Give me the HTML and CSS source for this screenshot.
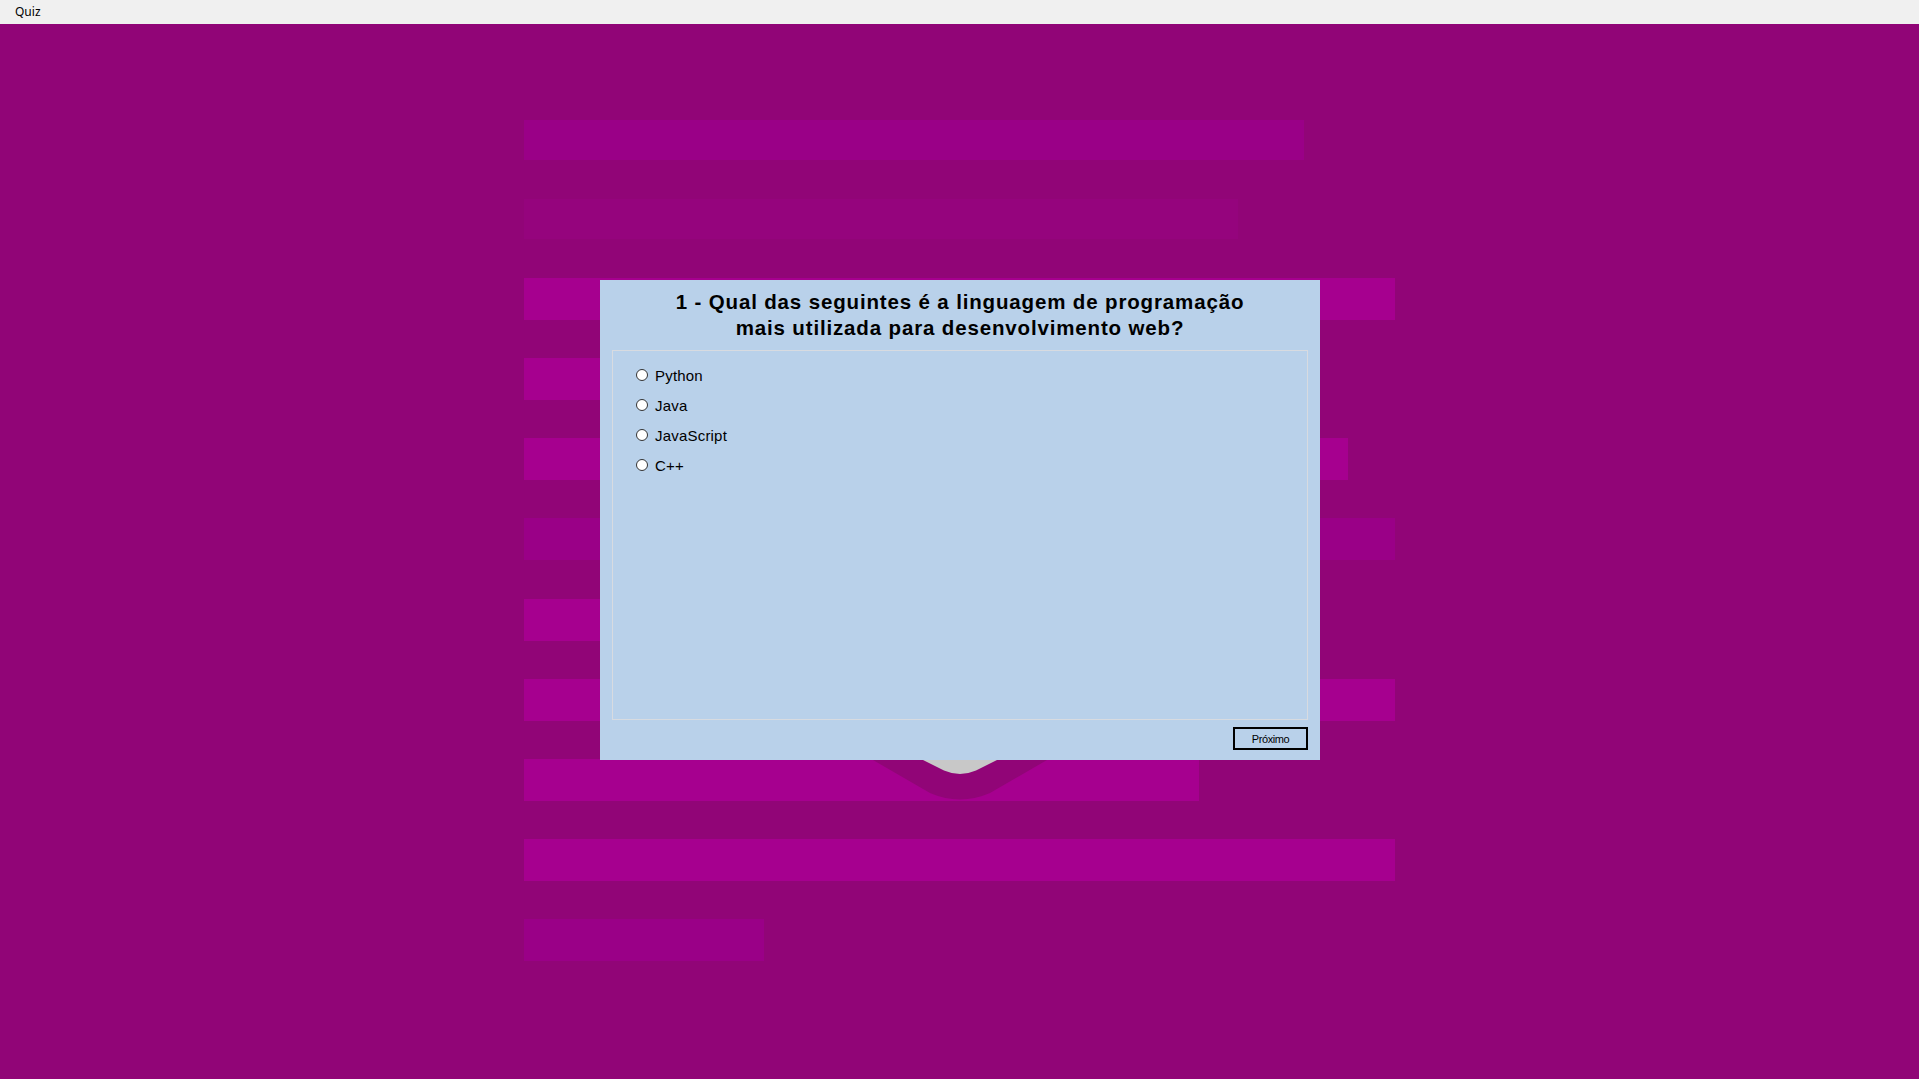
FILE: index.html
```html
<!DOCTYPE html>
<html lang="pt-BR">
<head>
<meta charset="utf-8">
<title>Quiz</title>
<link rel="stylesheet" href="styles.css">
</head>
<body>
<header class="titlebar"><span class="app-name">Quiz</span></header>
<main class="stage">
  <div class="bars">
    <div class="bar mid short" style="width:780px"></div>
    <div class="bar faint short" style="width:714px"></div>
    <div class="bar bright" style="width:871px"></div>
    <div class="bar bright" style="width:776px"></div>
    <div class="bar bright" style="width:824px"></div>
    <div class="bar mid" style="width:871px"></div>
    <div class="bar bright" style="width:776px"></div>
    <div class="bar bright" style="width:871px"></div>
    <div class="bar bright" style="width:675px"></div>
    <div class="bar bright" style="width:871px"></div>
    <div class="bar mid" style="width:240px"></div>
  </div>

  <svg class="chevron" viewBox="860 700 200 110" width="200" height="110" aria-hidden="true">
    <path class="chev-outer" d="M 820 700 L 1100 700 L 1047 760 L 990 793 Q 960 806 930 793 L 873 760 Z"/>
    <path class="chev-inner" d="M 900 700 L 1020 700 L 997 760 L 976 770.5 Q 960 777.5 944 770.5 L 923 760 Z"/>
  </svg>

  <section class="dialog">
    <h1 class="question">1 - Qual das seguintes é a linguagem de programação<br>mais utilizada para desenvolvimento web?</h1>
    <div class="groupbox">
      <label class="option"><span class="radio"></span><span class="opt-text">Python</span></label>
      <label class="option"><span class="radio"></span><span class="opt-text">Java</span></label>
      <label class="option"><span class="radio"></span><span class="opt-text">JavaScript</span></label>
      <label class="option"><span class="radio"></span><span class="opt-text">C++</span></label>
    </div>
    <div class="actions">
      <button class="next-btn" type="button">Próximo</button>
    </div>
  </section>
</main>
</body>
</html>
```

FILE: styles.css
```css
* { box-sizing: border-box; }

html, body {
  margin: 0;
  padding: 0;
  width: 1919px;
  height: 1079px;
  overflow: hidden;
  background: #910577;
}

.titlebar {
  height: 24px;
  background: #f0f0f0;
  padding-left: 15px;
  font-family: "Noto Sans", "Open Sans", sans-serif;
  font-size: 12px;
  line-height: 24px;
  color: #000;
}

.stage {
  position: relative;
  height: 1055px;
  padding-top: 96px;
}

.bars {
  margin-left: 524px;
  display: flex;
  flex-direction: column;
  align-items: flex-start;
}

.bar {
  height: 42px;
  margin-bottom: 38.15px;
}
.bar.short {
  height: 40px;
  margin-bottom: 39px;
}
.bar.bright { background: #a6008f; }
.bar.mid { background: #9a0087; }
.bar.faint { background: #95047d; }

.chevron {
  position: absolute;
  left: 860px;
  top: 676px;
  display: block;
}
.chev-outer { fill: #910577; }
.chev-inner { fill: #c8c8c8; }

.dialog {
  position: absolute;
  left: 600px;
  top: 256px;
  width: 720px;
  height: 480px;
  background: #b9d1ea;
  padding: 9px 12px 10px;
  display: flex;
  flex-direction: column;
}

.question {
  margin: 0;
  font-family: "Liberation Sans", Arial, sans-serif;
  font-weight: bold;
  font-size: 20.5px;
  line-height: 26px;
  letter-spacing: 0.85px;
  text-align: center;
  color: #000;
}

.groupbox {
  margin-top: 9px;
  height: 370px;
  border: 1px solid #d8dbe0;
  padding: 9px 0 0 23px;
  display: flex;
  flex-direction: column;
}

.option {
  height: 30px;
  display: flex;
  align-items: center;
  font-family: "Liberation Sans", Arial, sans-serif;
  font-size: 15px;
  letter-spacing: 0.2px;
  color: #000;
}

.radio {
  width: 12px;
  height: 12px;
  border-radius: 50%;
  border: 1px solid #333;
  background: #fff;
  margin-right: 7px;
  flex: none;
}

.actions {
  margin-top: 7px;
  display: flex;
  justify-content: flex-end;
}

.next-btn {
  width: 75px;
  height: 23px;
  border: 2px solid #000;
  background: transparent;
  padding: 0;
  font-family: "Liberation Sans", Arial, sans-serif;
  font-size: 11px;
  letter-spacing: -0.4px;
  color: #000;
  border-radius: 0;
}
```
